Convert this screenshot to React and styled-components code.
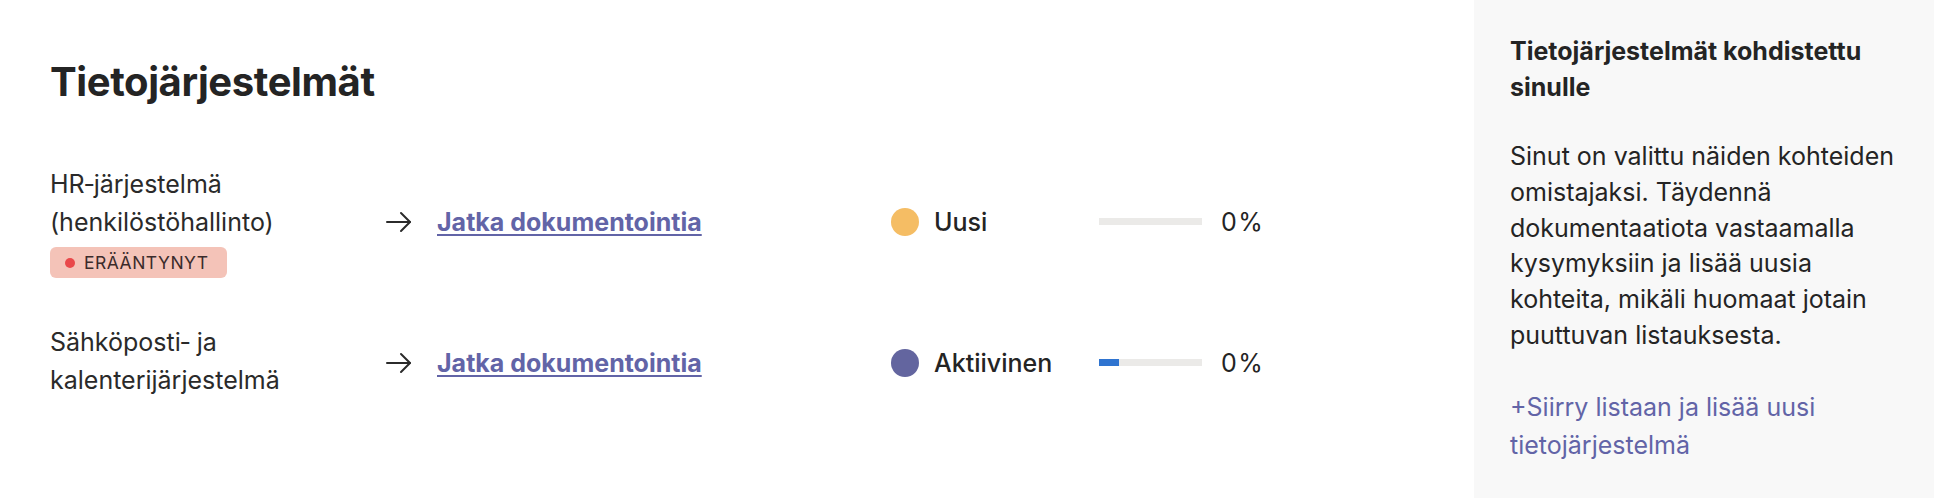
import React from 'react';
import styled, { createGlobalStyle } from 'styled-components';

const GlobalStyle = createGlobalStyle`
  html, body {
    margin: 0;
    padding: 0;
    background: #ffffff;
  }
  body {
    font-family: Inter, "Noto Sans", sans-serif;
    color: #242424;
  }
`;

const Page = styled.div`
  display: flex;
  min-height: 498px;
`;

const Main = styled.main`
  flex: 1;
  padding: 58px 50px 0;
`;

const Title = styled.h1`
  margin: 0;
  font-size: 40px;
  line-height: 48px;
  font-weight: 700;
  letter-spacing: -0.4px;
  color: #242424;
`;

const List = styled.div`
  margin-top: 59px;
  display: flex;
  flex-direction: column;
  gap: 45px;
`;

const Row = styled.div`
  display: grid;
  grid-template-columns: 335px 506px 208px auto;
  align-items: center;
`;

const NameCell = styled.div`
  display: flex;
  flex-direction: column;
`;

const Name = styled.div`
  width: 285px;
  font-size: 25px;
  line-height: 38px;
  color: #2a2a2a;
`;

const BadgeSlot = styled.div`
  margin-top: 3px;
  display: flex;
`;

const Badge = styled.span`
  display: inline-flex;
  align-items: center;
  gap: 9px;
  height: 31px;
  margin-top: 3px;
  padding: 0 18px 0 15px;
  border-radius: 6px;
  background: #f4c3b8;
  color: #3b2b2b;
  font-size: 17.5px;
  letter-spacing: 0.5px;
  text-transform: uppercase;
`;

const BadgeDot = styled.span`
  width: 10px;
  height: 10px;
  border-radius: 50%;
  background: #e9484a;
`;

const LinkCell = styled.div`
  display: flex;
  align-items: center;
  gap: 24px;
`;

const Arrow = styled.svg`
  width: 28px;
  height: 22px;
  flex-shrink: 0;
`;

const DocLink = styled.a`
  font-size: 25px;
  font-weight: 700;
  color: #6264a7;
  text-decoration: underline;
  text-decoration-thickness: 2px;
  text-underline-offset: 3px;
`;

const StatusCell = styled.div`
  display: flex;
  align-items: center;
  gap: 15px;
`;

const StatusDot = styled.span`
  width: 28px;
  height: 28px;
  border-radius: 50%;
  background: ${(p) => p.color};
`;

const StatusText = styled.span`
  font-size: 25px;
  font-weight: 500;
`;

const ProgressCell = styled.div`
  display: flex;
  align-items: center;
  gap: 19px;
`;

const Track = styled.div`
  width: 103px;
  height: 7px;
  background: #ebeae8;
`;

const Fill = styled.div`
  height: 100%;
  background: #2f74d0;
`;

const Percent = styled.span`
  font-size: 25px;
  letter-spacing: 1.5px;
`;

const Sidebar = styled.aside`
  width: 396px;
  flex-shrink: 0;
  padding: 33px 28px 0 36px;
  background: #f8f8f8;
`;

const SideTitle = styled.h2`
  margin: 0;
  font-size: 25px;
  line-height: 36px;
  font-weight: 700;
`;

const SideText = styled.p`
  margin: 34px 0 0;
  font-size: 25px;
  line-height: 35.8px;
`;

const AddLink = styled.a`
  display: block;
  margin-top: 34px;
  font-size: 25px;
  line-height: 38px;
  color: #6264a7;
  text-decoration: none;
`;

const ArrowIcon = () => (
  <Arrow viewBox="0 0 28 22" fill="none" stroke="#2b2b2b" strokeWidth="2" strokeLinecap="round" strokeLinejoin="round">
    <path d="M2 11h23" />
    <path d="M16 2l9 9-9 9" />
  </Arrow>
);

const SystemRow = ({ name, overdue, status, statusColor, progress }) => (
  <Row>
    <NameCell>
      <Name>{name}</Name>
      <BadgeSlot>
        {overdue && (
          <Badge>
            <BadgeDot />
            Erääntynyt
          </Badge>
        )}
      </BadgeSlot>
    </NameCell>
    <LinkCell>
      <ArrowIcon />
      <DocLink href="#">Jatka dokumentointia</DocLink>
    </LinkCell>
    <StatusCell>
      <StatusDot color={statusColor} />
      <StatusText>{status}</StatusText>
    </StatusCell>
    <ProgressCell>
      <Track>
        <Fill style={{ width: `${progress}%` }} />
      </Track>
      <Percent>0%</Percent>
    </ProgressCell>
  </Row>
);

const App = () => {
  const systems = [
    {
      name: 'HR\u2011järjestelmä (henkilöstöhallinto)',
      overdue: true,
      status: 'Uusi',
      statusColor: '#f5bd64',
      progress: 0,
    },
    {
      name: 'Sähköposti\u2011 ja kalenterijärjestelmä',
      overdue: false,
      status: 'Aktiivinen',
      statusColor: '#63659f',
      progress: 19,
    },
  ];

  return (
    <>
      <GlobalStyle />
      <Page>
        <Main>
          <Title>Tietojärjestelmät</Title>
          <List>
            {systems.map((s) => <SystemRow key={s.name} {...s} />)}
          </List>
        </Main>
        <Sidebar>
          <SideTitle>Tietojärjestelmät kohdistettu sinulle</SideTitle>
          <SideText>
            Sinut on valittu näiden kohteiden omistajaksi. Täydennä dokumentaatiota
            vastaamalla kysymyksiin ja lisää uusia kohteita, mikäli huomaat jotain
            puuttuvan listauksesta.
          </SideText>
          <AddLink href="#">+Siirry listaan ja lisää uusi tietojärjestelmä</AddLink>
        </Sidebar>
      </Page>
    </>
  );
};

export default App;
